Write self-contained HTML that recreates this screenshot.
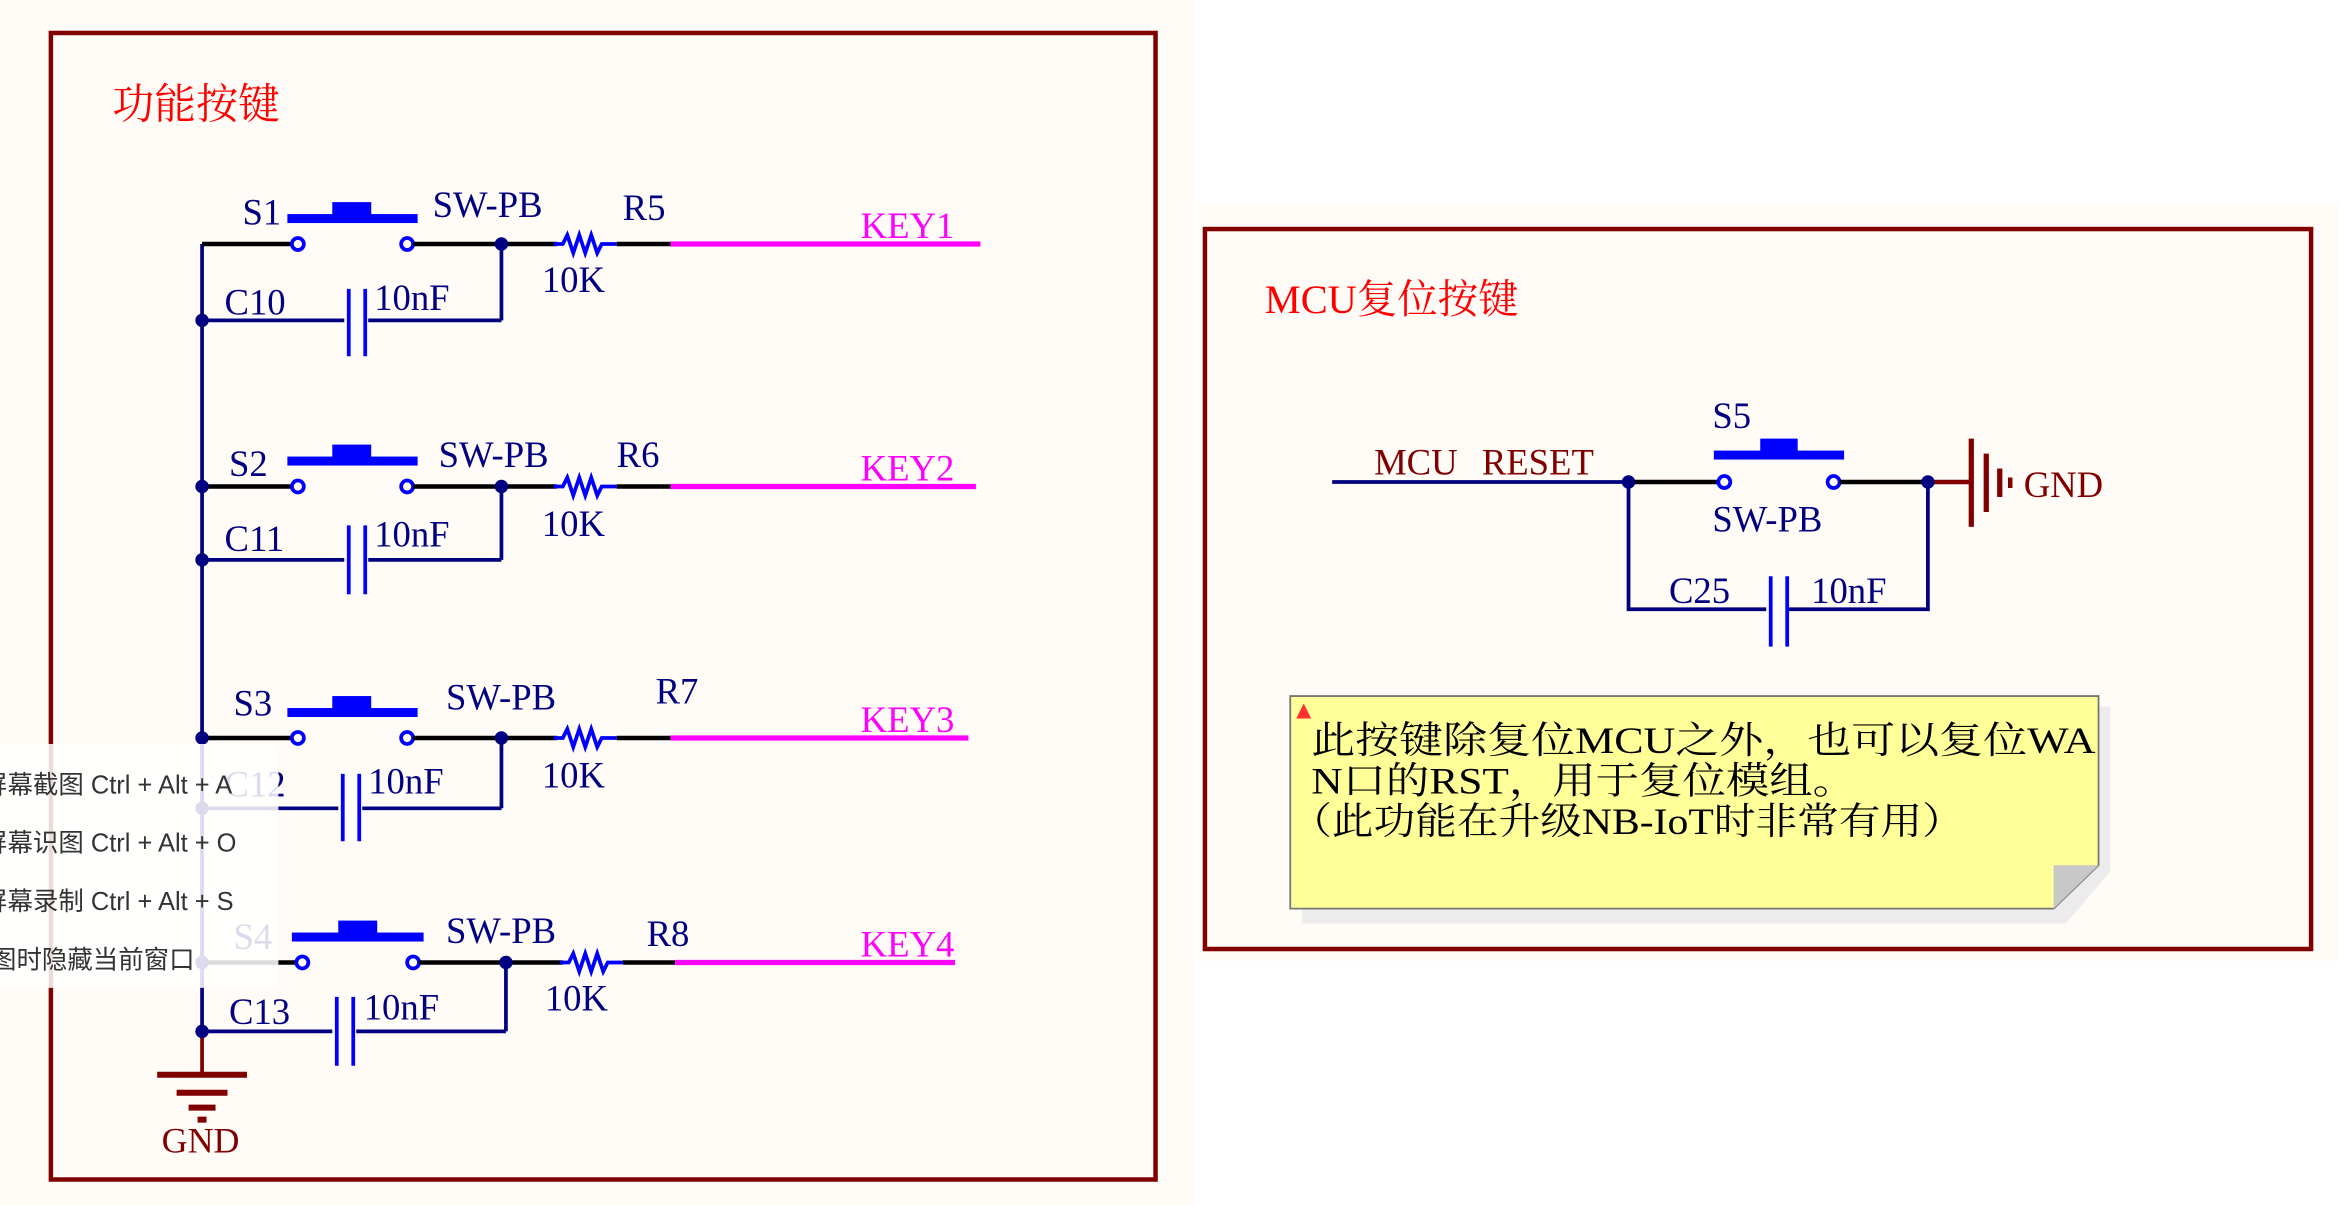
<!DOCTYPE html>
<html><head><meta charset="utf-8"><style>
html,body{margin:0;padding:0;background:#fff;}
svg{display:block;}
.s{font-family:"Liberation Serif","Noto Serif CJK SC",serif;}
.m{font-family:"Liberation Sans","Noto Sans CJK SC",sans-serif;}
</style></head><body>
<svg width="2347" height="1205" viewBox="0 0 1568 805" xmlns="http://www.w3.org/2000/svg">
<rect x="0" y="0" width="1568" height="805" fill="#fff"/>
<rect x="0" y="0" width="798" height="805" fill="#fffbf6"/>
<rect x="800" y="136" width="762" height="506" fill="#fffbf6"/>
<!-- LEFT BOX -->
<rect x="34" y="22" width="738" height="766" fill="none" stroke="#800000" stroke-width="3"/>
<text x="75" y="79" class="s" font-size="28" fill="#ff0000">功能按键</text>
<g class="s" font-size="24" fill="#000080">
<line x1="135" y1="163" x2="135" y2="689" stroke="#000080" stroke-width="2.5"/>
<line x1="135" y1="689" x2="135" y2="718" stroke="#800000" stroke-width="2.5"/>
<line x1="105" y1="718" x2="165" y2="718" stroke="#800000" stroke-width="4"/>
<line x1="118" y1="730" x2="152" y2="730" stroke="#800000" stroke-width="4"/>
<line x1="126" y1="740" x2="144" y2="740" stroke="#800000" stroke-width="4"/>
<line x1="132" y1="748" x2="138" y2="748" stroke="#800000" stroke-width="4"/>
<text x="108" y="770" fill="#800000">GND</text>
</g>
<g class="s" font-size="24.5">
<g>
<line x1="135" y1="163" x2="195" y2="163" stroke="#000" stroke-width="3"/>
<circle cx="199" cy="163" r="4" fill="none" stroke="#0000ff" stroke-width="2.5"/>
<circle cx="272" cy="163" r="4" fill="none" stroke="#0000ff" stroke-width="2.5"/>
<rect x="192" y="143" width="87" height="6" fill="#0000ff"/><rect x="222" y="135" width="26" height="10" fill="#0000ff"/>
<line x1="276" y1="163" x2="372" y2="163" stroke="#000" stroke-width="3"/>
<circle cx="335" cy="163" r="4.5" fill="#000080"/>
<polyline points="370,163 376,163 379,157 383,169 387,157 391,169 395,157 399,169 402,163 412,163" fill="none" stroke="#0000ff" stroke-width="2.5"/>
<line x1="412" y1="163" x2="448" y2="163" stroke="#000" stroke-width="3"/>
<line x1="448" y1="163" x2="655" y2="163" stroke="#ff00ff" stroke-width="3.5"/>
<line x1="335" y1="163" x2="335" y2="214" stroke="#000080" stroke-width="2.5"/>
<line x1="135" y1="214" x2="230" y2="214" stroke="#000080" stroke-width="2.5"/>
<line x1="246" y1="214" x2="335" y2="214" stroke="#000080" stroke-width="2.5"/>
<line x1="233" y1="193" x2="233" y2="238" stroke="#0000ff" stroke-width="2.5"/>
<line x1="244" y1="193" x2="244" y2="238" stroke="#0000ff" stroke-width="2.5"/>
<circle cx="135" cy="214" r="4.5" fill="#000080"/>
<text x="162" y="150" fill="#000080">S1</text><text x="289" y="145" fill="#000080">SW-PB</text>
<text x="416" y="147" fill="#000080">R5</text><text x="362" y="195" fill="#000080">10K</text>
<text x="575" y="159" fill="#ff00ff">KEY1</text>
<text x="150" y="210" fill="#000080">C10</text><text x="250" y="207" fill="#000080">10nF</text>
</g>
<g>
<line x1="135" y1="325" x2="195" y2="325" stroke="#000" stroke-width="3"/>
<circle cx="199" cy="325" r="4" fill="none" stroke="#0000ff" stroke-width="2.5"/>
<circle cx="272" cy="325" r="4" fill="none" stroke="#0000ff" stroke-width="2.5"/>
<rect x="192" y="305" width="87" height="6" fill="#0000ff"/><rect x="222" y="297" width="26" height="10" fill="#0000ff"/>
<line x1="276" y1="325" x2="372" y2="325" stroke="#000" stroke-width="3"/>
<circle cx="335" cy="325" r="4.5" fill="#000080"/>
<polyline points="370,325 376,325 379,319 383,331 387,319 391,331 395,319 399,331 402,325 412,325" fill="none" stroke="#0000ff" stroke-width="2.5"/>
<line x1="412" y1="325" x2="448" y2="325" stroke="#000" stroke-width="3"/>
<line x1="448" y1="325" x2="652" y2="325" stroke="#ff00ff" stroke-width="3.5"/>
<line x1="335" y1="325" x2="335" y2="374" stroke="#000080" stroke-width="2.5"/>
<line x1="135" y1="374" x2="230" y2="374" stroke="#000080" stroke-width="2.5"/>
<line x1="246" y1="374" x2="335" y2="374" stroke="#000080" stroke-width="2.5"/>
<line x1="233" y1="351" x2="233" y2="397" stroke="#0000ff" stroke-width="2.5"/>
<line x1="244" y1="351" x2="244" y2="397" stroke="#0000ff" stroke-width="2.5"/>
<circle cx="135" cy="325" r="4.5" fill="#000080"/><circle cx="135" cy="374" r="4.5" fill="#000080"/>
<text x="153" y="318" fill="#000080">S2</text><text x="293" y="312" fill="#000080">SW-PB</text>
<text x="412" y="312" fill="#000080">R6</text><text x="362" y="358" fill="#000080">10K</text>
<text x="575" y="321" fill="#ff00ff">KEY2</text>
<text x="150" y="368" fill="#000080">C11</text><text x="250" y="365" fill="#000080">10nF</text>
</g>
<g>
<line x1="135" y1="493" x2="195" y2="493" stroke="#000" stroke-width="3"/>
<circle cx="199" cy="493" r="4" fill="none" stroke="#0000ff" stroke-width="2.5"/>
<circle cx="272" cy="493" r="4" fill="none" stroke="#0000ff" stroke-width="2.5"/>
<rect x="192" y="473" width="87" height="6" fill="#0000ff"/><rect x="222" y="465" width="26" height="10" fill="#0000ff"/>
<line x1="276" y1="493" x2="372" y2="493" stroke="#000" stroke-width="3"/>
<circle cx="335" cy="493" r="4.5" fill="#000080"/>
<polyline points="370,493 376,493 379,487 383,499 387,487 391,499 395,487 399,499 402,493 412,493" fill="none" stroke="#0000ff" stroke-width="2.5"/>
<line x1="412" y1="493" x2="448" y2="493" stroke="#000" stroke-width="3"/>
<line x1="448" y1="493" x2="647" y2="493" stroke="#ff00ff" stroke-width="3.5"/>
<line x1="335" y1="493" x2="335" y2="540" stroke="#000080" stroke-width="2.5"/>
<line x1="135" y1="540" x2="226" y2="540" stroke="#000080" stroke-width="2.5"/>
<line x1="242" y1="540" x2="335" y2="540" stroke="#000080" stroke-width="2.5"/>
<line x1="229" y1="517" x2="229" y2="562" stroke="#0000ff" stroke-width="2.5"/>
<line x1="240" y1="517" x2="240" y2="562" stroke="#0000ff" stroke-width="2.5"/>
<circle cx="135" cy="493" r="4.5" fill="#000080"/><circle cx="135" cy="540" r="4.5" fill="#000080"/>
<text x="156" y="478" fill="#000080">S3</text><text x="298" y="474" fill="#000080">SW-PB</text>
<text x="438" y="470" fill="#000080">R7</text><text x="362" y="526" fill="#000080">10K</text>
<text x="575" y="489" fill="#ff00ff">KEY3</text>
<text x="150" y="532" fill="#000080">C12</text><text x="246" y="530" fill="#000080">10nF</text>
</g>
<g>
<line x1="135" y1="643" x2="198" y2="643" stroke="#000" stroke-width="3"/>
<circle cx="202" cy="643" r="4" fill="none" stroke="#0000ff" stroke-width="2.5"/>
<circle cx="276" cy="643" r="4" fill="none" stroke="#0000ff" stroke-width="2.5"/>
<rect x="195" y="623" width="88" height="6" fill="#0000ff"/><rect x="226" y="615" width="26" height="10" fill="#0000ff"/>
<line x1="280" y1="643" x2="376" y2="643" stroke="#000" stroke-width="3"/>
<circle cx="338" cy="643" r="4.5" fill="#000080"/>
<polyline points="374,643 380,643 383,637 387,649 391,637 395,649 399,637 403,649 406,643 416,643" fill="none" stroke="#0000ff" stroke-width="2.5"/>
<line x1="416" y1="643" x2="451" y2="643" stroke="#000" stroke-width="3"/>
<line x1="451" y1="643" x2="638" y2="643" stroke="#ff00ff" stroke-width="3.5"/>
<line x1="338" y1="643" x2="338" y2="689" stroke="#000080" stroke-width="2.5"/>
<line x1="135" y1="689" x2="222" y2="689" stroke="#000080" stroke-width="2.5"/>
<line x1="238" y1="689" x2="338" y2="689" stroke="#000080" stroke-width="2.5"/>
<line x1="225" y1="666" x2="225" y2="712" stroke="#0000ff" stroke-width="2.5"/>
<line x1="236" y1="666" x2="236" y2="712" stroke="#0000ff" stroke-width="2.5"/>
<circle cx="135" cy="643" r="4.5" fill="#000080"/><circle cx="135" cy="689" r="4.5" fill="#000080"/>
<text x="156" y="634" fill="#000080">S4</text><text x="298" y="630" fill="#000080">SW-PB</text>
<text x="432" y="632" fill="#000080">R8</text><text x="364" y="675" fill="#000080">10K</text>
<text x="575" y="639" fill="#ff00ff">KEY4</text>
<text x="153" y="684" fill="#000080">C13</text><text x="243" y="681" fill="#000080">10nF</text>
</g>
</g>
<!-- overlay menu -->
<rect x="-5" y="497" width="191" height="163" rx="3" fill="#ffffff" fill-opacity="0.86"/>
<g class="m" font-size="17" fill="#333">
<text x="-12" y="530">屏幕截图 Ctrl + Alt + A</text>
<text x="-12" y="569">屏幕识图 Ctrl + Alt + O</text>
<text x="-12" y="608">屏幕录制 Ctrl + Alt + S</text>
<text x="-23" y="647">截图时隐藏当前窗口</text>
</g>
<!-- RIGHT BOX -->
<rect x="805" y="153" width="739" height="481" fill="none" stroke="#800000" stroke-width="3"/>
<text x="845" y="209" class="s" font-size="27" fill="#ff0000">MCU复位按键</text>
<g class="s" font-size="24.5">
<line x1="890" y1="322" x2="1088" y2="322" stroke="#000080" stroke-width="2.5"/>
<text x="918" y="317" fill="#800000">MCU</text><text x="990" y="317" fill="#800000">RESET</text>
<line x1="1088" y1="322" x2="1148" y2="322" stroke="#000" stroke-width="3"/>
<circle cx="1152" cy="322" r="4" fill="none" stroke="#0000ff" stroke-width="2.5"/>
<circle cx="1225" cy="322" r="4" fill="none" stroke="#0000ff" stroke-width="2.5"/>
<rect x="1145" y="301" width="87" height="6" fill="#0000ff"/><rect x="1176" y="293" width="25" height="10" fill="#0000ff"/>
<line x1="1229" y1="322" x2="1288" y2="322" stroke="#000" stroke-width="3"/>
<line x1="1288" y1="322" x2="1317" y2="322" stroke="#800000" stroke-width="3"/>
<line x1="1317" y1="293" x2="1317" y2="352" stroke="#800000" stroke-width="3.5"/>
<line x1="1327" y1="303" x2="1327" y2="342" stroke="#800000" stroke-width="3.5"/>
<line x1="1336" y1="313" x2="1336" y2="332" stroke="#800000" stroke-width="3.5"/>
<line x1="1343" y1="319" x2="1343" y2="326" stroke="#800000" stroke-width="3"/>
<text x="1352" y="332" fill="#800000">GND</text>
<circle cx="1088" cy="322" r="4.5" fill="#000080"/><circle cx="1288" cy="322" r="4.5" fill="#000080"/>
<polyline points="1088,322 1088,407 1180,407" fill="none" stroke="#000080" stroke-width="2.5"/>
<polyline points="1195,407 1288,407 1288,322" fill="none" stroke="#000080" stroke-width="2.5"/>
<line x1="1183" y1="385" x2="1183" y2="432" stroke="#0000ff" stroke-width="2.5"/>
<line x1="1194" y1="385" x2="1194" y2="432" stroke="#0000ff" stroke-width="2.5"/>
<text x="1144" y="286" fill="#000080">S5</text>
<text x="1144" y="355" fill="#000080">SW-PB</text>
<text x="1115" y="403" fill="#000080">C25</text>
<text x="1210" y="403" fill="#000080">10nF</text>
</g>
<!-- note -->
<polygon points="870,472 1410,472 1410,582 1380,617 870,617" fill="#ececec"/>
<polygon points="862,465 1402,465 1402,578 1372,607 862,607" fill="#ffff99" stroke="#777" stroke-width="1.2"/>
<polygon points="1372,578 1402,578 1372,607" fill="#c8c8c8"/>
<polygon points="866,480 871,470 876,480" fill="#ff3030"/>
<g class="s" font-size="25" fill="#000">
<text x="876" y="503" textLength="524" lengthAdjust="spacingAndGlyphs">此按键除复位MCU之外，也可以复位WA</text>
<text x="876" y="530" textLength="364" lengthAdjust="spacingAndGlyphs">N口的RST，用于复位模组。</text>
<text x="862" y="557" textLength="450" lengthAdjust="spacingAndGlyphs">（此功能在升级NB-IoT时非常有用）</text>
</g>
</svg>
</body></html>
